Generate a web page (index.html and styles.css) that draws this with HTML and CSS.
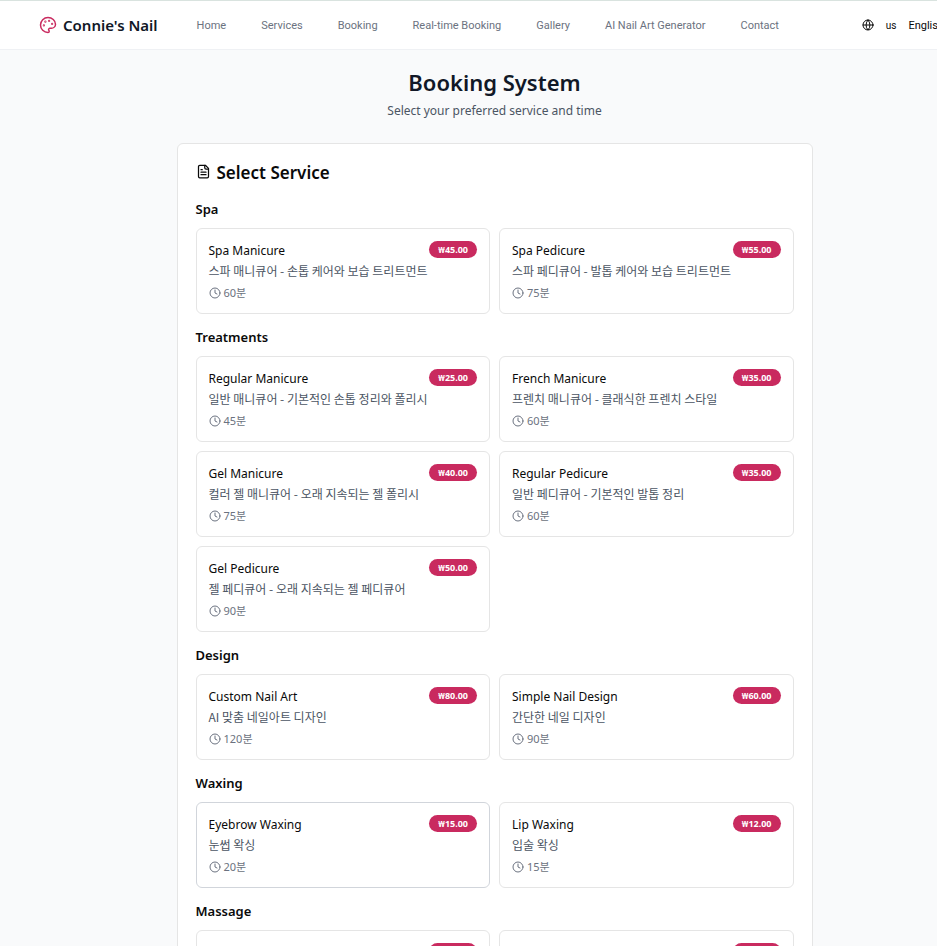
FILE: index.html
```html
<!DOCTYPE html>
<html lang="en">
<head>
<meta charset="utf-8">
<meta name="viewport" content="width=device-width, initial-scale=1">
<title>Booking System - Connie's Nail</title>
<link rel="stylesheet" href="styles.css">
</head>
<body>
<svg class="sprite" aria-hidden="true">
  <symbol id="clock" viewBox="0 0 24 24"><circle cx="12" cy="12" r="10"/><path d="M12 6v6l4 2"/></symbol>
</svg>

<header class="site-header">
  <a class="brand" href="#">
    <svg class="icon brand-icon" viewBox="0 0 24 24" aria-hidden="true"><circle cx="13.5" cy="6.5" r=".5"/><circle cx="17.5" cy="10.5" r=".5"/><circle cx="8.5" cy="7.5" r=".5"/><circle cx="6.5" cy="12.5" r=".5"/><path d="M12 2C6.5 2 2 6.500 2 12s4.500 10 10 10c.926 0 1.648-.746 1.648-1.688 0-.437-.18-.835-.437-1.125-.29-.289-.438-.652-.438-1.125a1.640 1.640 0 0 1 1.668-1.668h1.996c3.051 0 5.555-2.503 5.555-5.554C21.965 6.012 17.461 2 12 2z"/></svg>
    <span>Connie's Nail</span>
  </a>
  <nav class="nav" aria-label="Main">
    <a href="#">Home</a>
    <a href="#">Services</a>
    <a href="#">Booking</a>
    <a href="#">Real-time Booking</a>
    <a href="#">Gallery</a>
    <a href="#">AI Nail Art Generator</a>
    <a href="#">Contact</a>
  </nav>
  <button class="language" type="button">
    <svg class="icon globe-icon" viewBox="0 0 24 24" aria-hidden="true"><circle cx="12" cy="12" r="10"/><path d="M12 2a14.500 14.500 0 0 0 0 20 14.500 14.500 0 0 0 0-20"/><path d="M2 12h20"/></svg>
    <span class="flag">us</span>
    <span>English</span>
  </button>
</header>

<main class="page">
  <h1>Booking System</h1>
  <p class="subtitle">Select your preferred service and time</p>

  <div class="panel">
    <h2>
      <svg class="icon file-icon" viewBox="0 0 24 24" aria-hidden="true"><path d="M15 2H6a2 2 0 0 0-2 2v16a2 2 0 0 0 2 2h12a2 2 0 0 0 2-2V7Z"/><path d="M14 2v4a2 2 0 0 0 2 2h4"/><path d="M10 9H8"/><path d="M16 13H8"/><path d="M16 17H8"/></svg>
      Select Service
    </h2>

    <section class="category">
      <h3>Spa</h3>
      <div class="services">
        <button class="service" type="button">
          <span class="service-head"><span class="name">Spa Manicure</span><span class="price">₩45.00</span></span>
          <span class="description">스파 매니큐어 - 손톱 케어와 보습 트리트먼트</span>
          <span class="duration"><svg class="icon"><use href="#clock"/></svg>60분</span>
        </button>
        <button class="service" type="button">
          <span class="service-head"><span class="name">Spa Pedicure</span><span class="price">₩55.00</span></span>
          <span class="description">스파 페디큐어 - 발톱 케어와 보습 트리트먼트</span>
          <span class="duration"><svg class="icon"><use href="#clock"/></svg>75분</span>
        </button>
      </div>
    </section>

    <section class="category">
      <h3>Treatments</h3>
      <div class="services">
        <button class="service" type="button">
          <span class="service-head"><span class="name">Regular Manicure</span><span class="price">₩25.00</span></span>
          <span class="description">일반 매니큐어 - 기본적인 손톱 정리와 폴리시</span>
          <span class="duration"><svg class="icon"><use href="#clock"/></svg>45분</span>
        </button>
        <button class="service" type="button">
          <span class="service-head"><span class="name">French Manicure</span><span class="price">₩35.00</span></span>
          <span class="description">프렌치 매니큐어 - 클래식한 프렌치 스타일</span>
          <span class="duration"><svg class="icon"><use href="#clock"/></svg>60분</span>
        </button>
        <button class="service" type="button">
          <span class="service-head"><span class="name">Gel Manicure</span><span class="price">₩40.00</span></span>
          <span class="description">컬러 젤 매니큐어 - 오래 지속되는 젤 폴리시</span>
          <span class="duration"><svg class="icon"><use href="#clock"/></svg>75분</span>
        </button>
        <button class="service" type="button">
          <span class="service-head"><span class="name">Regular Pedicure</span><span class="price">₩35.00</span></span>
          <span class="description">일반 페디큐어 - 기본적인 발톱 정리</span>
          <span class="duration"><svg class="icon"><use href="#clock"/></svg>60분</span>
        </button>
        <button class="service" type="button">
          <span class="service-head"><span class="name">Gel Pedicure</span><span class="price">₩50.00</span></span>
          <span class="description">젤 페디큐어 - 오래 지속되는 젤 페디큐어</span>
          <span class="duration"><svg class="icon"><use href="#clock"/></svg>90분</span>
        </button>
      </div>
    </section>

    <section class="category">
      <h3>Design</h3>
      <div class="services">
        <button class="service" type="button">
          <span class="service-head"><span class="name">Custom Nail Art</span><span class="price">₩80.00</span></span>
          <span class="description">AI 맞춤 네일아트 디자인</span>
          <span class="duration"><svg class="icon"><use href="#clock"/></svg>120분</span>
        </button>
        <button class="service" type="button">
          <span class="service-head"><span class="name">Simple Nail Design</span><span class="price">₩60.00</span></span>
          <span class="description">간단한 네일 디자인</span>
          <span class="duration"><svg class="icon"><use href="#clock"/></svg>90분</span>
        </button>
      </div>
    </section>

    <section class="category">
      <h3>Waxing</h3>
      <div class="services">
        <button class="service is-active" type="button">
          <span class="service-head"><span class="name">Eyebrow Waxing</span><span class="price">₩15.00</span></span>
          <span class="description">눈썹 왁싱</span>
          <span class="duration"><svg class="icon"><use href="#clock"/></svg>20분</span>
        </button>
        <button class="service" type="button">
          <span class="service-head"><span class="name">Lip Waxing</span><span class="price">₩12.00</span></span>
          <span class="description">입술 왁싱</span>
          <span class="duration"><svg class="icon"><use href="#clock"/></svg>15분</span>
        </button>
      </div>
    </section>

    <section class="category">
      <h3>Massage</h3>
      <div class="services">
        <button class="service" type="button">
          <span class="service-head"><span class="name">Hand Massage</span><span class="price">₩30.00</span></span>
          <span class="description">손 마사지</span>
          <span class="duration"><svg class="icon"><use href="#clock"/></svg>30분</span>
        </button>
        <button class="service" type="button">
          <span class="service-head"><span class="name">Foot Massage</span><span class="price">₩40.00</span></span>
          <span class="description">발 마사지</span>
          <span class="duration"><svg class="icon"><use href="#clock"/></svg>45분</span>
        </button>
      </div>
    </section>
  </div>
</main>
</body>
</html>
```
FILE: styles.css
```css
* {
  box-sizing: border-box;
}

body {
  min-width: 989px;
  margin: 0;
  background: #f9fafb;
  color: #0a0a0a;
  font-family: "Noto Sans", "Noto Sans CJK KR", sans-serif;
  font-size: 12px;
}

h1,
h2,
h3,
p {
  margin: 0;
}

button {
  font: inherit;
  color: inherit;
  cursor: pointer;
}

.sprite {
  display: none;
}

.icon {
  flex: none;
  width: 12px;
  height: 12px;
  fill: none;
  stroke: currentColor;
  stroke-width: 2;
  stroke-linecap: round;
  stroke-linejoin: round;
}

.site-header {
  display: flex;
  align-items: center;
  height: 50px;
  padding: 0 45px 0 39px;
  border-top: 1px solid #d9e3df;
  border-bottom: 1px solid #eff1f4;
  background: #fff;
}

.brand {
  display: flex;
  align-items: center;
  gap: 6px;
  margin-right: 39px;
  color: #111827;
  font-size: 15px;
  font-weight: 600;
  text-decoration: none;
}

.brand-icon {
  width: 18px;
  height: 18px;
  color: #c92a5f;
}

.nav {
  display: flex;
  gap: 35px;
}

.nav a {
  color: #6b7280;
  font-family: Roboto, sans-serif;
  font-size: 11px;
  line-height: 19px;
  text-decoration: none;
  white-space: nowrap;
}

.language {
  display: flex;
  align-items: center;
  gap: 12px;
  margin-left: auto;
  padding: 0;
  border: 0;
  background: none;
  font-family: Roboto, sans-serif;
  font-size: 11px;
  line-height: 19px;
}

.language .flag {
  font-size: 10px;
}

.page {
  display: flex;
  flex-direction: column;
  align-items: center;
  padding: 18px 18px 36px;
}

h1 {
  color: #111827;
  font-size: 22px;
  font-weight: 600;
  line-height: 28px;
}

.subtitle {
  margin-top: 6px;
  color: #4b5563;
  line-height: 18px;
}

.panel {
  width: 100%;
  max-width: 636px;
  margin-top: 23px;
  padding: 18px;
  border: 1px solid #e5e5e5;
  border-radius: 6px;
  background: #fff;
}

h2 {
  display: flex;
  align-items: baseline;
  gap: 6px;
  font-size: 17px;
  font-weight: 600;
  line-height: 22px;
}

.file-icon {
  width: 15px;
  height: 15px;
}

.category {
  margin-top: 14px;
}

h2 + .category {
  margin-top: 16px;
}

h3 {
  margin-bottom: 10px;
  font-size: 13px;
  font-weight: 600;
  line-height: 18px;
}

.services {
  display: grid;
  grid-template-columns: 1fr 1fr;
  gap: 9px;
}

.service {
  display: flex;
  flex-direction: column;
  padding: 12px;
  border: 1px solid #e5e5e5;
  border-radius: 6px;
  background: #fff;
  text-align: left;
}

.service.is-active {
  border-color: #d1d5db;
}

.service-head {
  display: flex;
  align-items: flex-start;
  justify-content: space-between;
  line-height: 20px;
}

.price {
  padding: 0 9px;
  border-radius: 9px;
  background: #c92a5f;
  color: #fff;
  font-size: 9px;
  font-weight: 700;
  line-height: 17px;
}

.description {
  margin: 3px 0 6px;
  color: #4b5563;
  font-family: "Noto Sans CJK KR", sans-serif;
  font-size: 12px;
  line-height: 14px;
}

.duration {
  display: flex;
  align-items: center;
  gap: 3px;
  color: #6b7280;
  font-size: 11px;
  line-height: 17px;
}
```
